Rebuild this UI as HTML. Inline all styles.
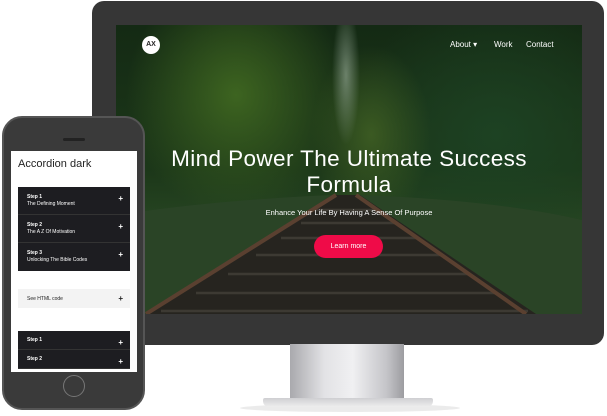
<!DOCTYPE html>
<html><head><style>
*{margin:0;padding:0;box-sizing:border-box}
body{width:607px;height:416px;background:#fff;position:relative;overflow:hidden;font-family:"Liberation Sans",sans-serif}
.mon{position:absolute;left:92px;top:1px;width:512px;height:344px;background:#363636;border-radius:12px}
.scr{position:absolute;left:116px;top:25px;width:466px;height:289px;overflow:hidden;
background:
radial-gradient(ellipse 14px 70px at 230px 50px,rgba(140,160,140,.7) 0%,rgba(0,0,0,0) 100%),
radial-gradient(ellipse 110px 120px at 120px 70px,#3d6420 0%,rgba(40,70,20,0) 100%),
radial-gradient(ellipse 60px 90px at 255px 110px,#3b5a22 0%,rgba(40,70,20,0) 100%),
radial-gradient(ellipse 150px 140px at 380px 110px,#1d4223 0%,rgba(20,40,20,0) 100%),
linear-gradient(180deg,#142a14 0%,#1c3719 50%,#2a4a25 75%,#263a24 100%)}
.track{position:absolute;left:0;top:0;width:466px;height:289px}
.stand{position:absolute;left:290px;top:344px;width:114px;height:56px;background:linear-gradient(90deg,#a9a9ad,#e2e2e5 30%,#f0f0f2 55%,#c4c4c8 85%,#9c9ca0)}
.base{position:absolute;left:263px;top:398px;width:170px;height:9px;background:linear-gradient(180deg,#cfcfd2,#eee);border-radius:2px 2px 6px 6px}
.shadow{position:absolute;left:240px;top:404px;width:220px;height:8px;border-radius:50%;background:rgba(0,0,0,.08)}
.logo{position:absolute;left:26px;top:11px;width:18px;height:18px;border-radius:50%;background:#fff;color:#222;font-size:7px;font-weight:bold;text-align:center;line-height:18px}
.nav{position:absolute;top:15px;color:#fff;font-size:8px}
h1{position:absolute;left:0;width:466px;top:121px;text-align:center;color:#fff;font-weight:normal;font-size:22.5px;line-height:26px;letter-spacing:.4px}
.sub{position:absolute;left:0;width:466px;top:183px;text-align:center;color:#fff;font-size:7.5px}
.btn{position:absolute;left:198px;top:210px;width:69px;height:23px;border-radius:12px;background:#ef0b48;color:#fff;font-size:7px;text-align:center;line-height:23px}
.phone{position:absolute;left:2px;top:116px;width:143px;height:294px;background:#3a3a3a;border-radius:20px;border:2px solid #555}
.spk{position:absolute;left:59px;top:20px;width:22px;height:3px;border-radius:2px;background:#222}
.home{position:absolute;left:59px;top:257px;width:22px;height:22px;border-radius:50%;border:1px solid #777}
.pscr{position:absolute;left:11px;top:151px;width:126px;height:221px;background:#fff;overflow:hidden}
.pt{position:absolute;left:7px;top:7px;font-size:11px;color:#222}
.dk{position:absolute;left:7px;width:112px;background:#1d1d21}
.row{height:28px;border-bottom:1px solid #333;color:#fff;font-size:5px;padding:7px 9px;position:relative;line-height:7px}
.row b{font-weight:bold}
.row:after{content:"+";position:absolute;right:7px;top:8px;font-size:8px;font-weight:bold}
.lt{position:absolute;left:7px;top:138px;width:112px;height:19px;background:#f3f3f3;font-size:5px;color:#222;padding:7px 9px;}
.lt:after{content:"+";position:absolute;right:7px;top:5px;font-size:8px;font-weight:bold}
</style></head><body>
<div class="shadow"></div>
<div class="mon"></div>
<div class="stand"></div><div class="base"></div>
<div class="scr">
<svg class="track" viewBox="0 0 466 289">
<path d="M0 190 Q100 175 216 170 L244 170 Q380 175 466 195 L466 289 L0 289Z" fill="#2a4426"/>
<polygon points="216,170 244,170 420,289 30,289" fill="#26241f"/>
<g stroke="#3d3a33" stroke-width="2.5">
<line x1="200" y1="185" x2="262" y2="185"/><line x1="185" y1="198" x2="280" y2="198"/><line x1="165" y1="213" x2="300" y2="213"/><line x1="140" y1="230" x2="325" y2="230"/><line x1="112" y1="249" x2="352" y2="249"/><line x1="80" y1="268" x2="380" y2="268"/><line x1="45" y1="286" x2="412" y2="286"/></g>
<path d="M220 170 L30 289" stroke="#5a4030" stroke-width="4"/>
<path d="M240 170 L410 289" stroke="#5a4030" stroke-width="4"/>
</svg>
<div class="logo">AX</div>
<div class="nav" style="left:334px">About ▾</div>
<div class="nav" style="left:378px">Work</div>
<div class="nav" style="left:410px">Contact</div>
<h1>Mind Power The Ultimate Success<br>Formula</h1>
<div class="sub">Enhance Your Life By Having A Sense Of Purpose</div>
<div class="btn">Learn more</div>
</div>
<div class="phone"><div class="spk"></div><div class="home"></div></div>
<div class="pscr">
<div class="pt">Accordion dark</div>
<div class="dk" style="top:36px">
<div class="row"><b>Step 1</b><br>The Defining Moment</div>
<div class="row"><b>Step 2</b><br>The A Z Of Motivation</div>
<div class="row" style="border:0"><b>Step 3</b><br>Unlocking The Bible Codes</div>
</div>
<div class="lt">See HTML code</div>
<div class="dk" style="top:180px">
<div class="row" style="height:19px;padding:6px 9px"><b>Step 1</b></div>
<div class="row" style="height:19px;padding:6px 9px"><b>Step 2</b></div>
</div>
</div>
</body></html>
